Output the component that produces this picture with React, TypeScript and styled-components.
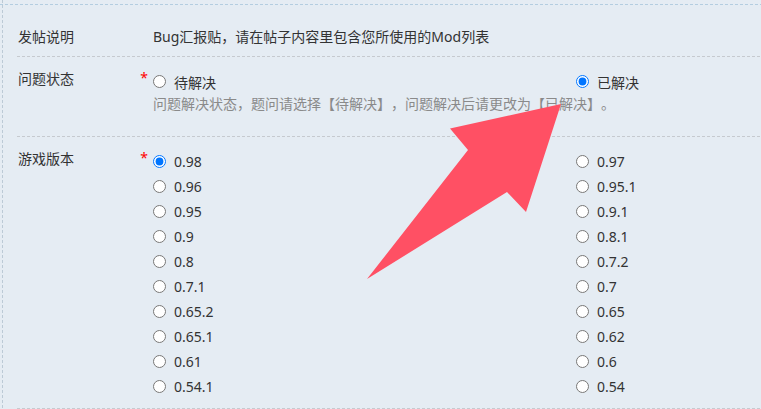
import React from "react";
import styled, { createGlobalStyle } from "styled-components";

const GlobalStyle = createGlobalStyle`
  html, body {
    margin: 0;
    padding: 0;
    background: #e5ecf3;
    overflow: hidden;
  }
  body {
    font-family: "Noto Sans", "Noto Sans CJK SC", sans-serif;
    font-size: 14px;
    color: #333;
    text-spacing-trim: space-all;
  }
`;

const Page = styled.div`
  position: relative;
  width: 761px;
  height: 409px;
  overflow: hidden;
`;

const Frame = styled.div`
  width: 1100px;
  padding: 5px 0 0 17px;
  background:
    repeating-linear-gradient(90deg, #b4cde0 0 3px, transparent 3px 5px) 0 4px / 100% 1px no-repeat,
    repeating-linear-gradient(180deg, #bccad6 0 3px, transparent 3px 5px) 2px 0 / 1px 100% no-repeat;
`;

const Row = styled.div<{ $pt: number; $pb: number; $center?: boolean }>`
  display: grid;
  grid-template-columns: 136px 1fr;
  align-items: ${(p) => (p.$center ? "center" : "start")};
  padding: ${(p) => p.$pt}px 0 ${(p) => p.$pb}px 0;
  background: repeating-linear-gradient(90deg, #c6cacf 0 3px, transparent 3px 5px) left bottom / 100% 1px no-repeat;
`;

const LabelCell = styled.div`
  display: flex;
  justify-content: space-between;
  align-items: flex-start;
  padding: 0 5px 0 1px;
  line-height: 20px;
  color: #333;
`;

const Star = styled.span`
  color: #f00;
  line-height: 17px;
`;

const Text = styled.div`
  line-height: 25px;
  color: #333;
`;

const Options = styled.div`
  display: grid;
  grid-template-columns: repeat(2, 423px);
`;

const Option = styled.label`
  display: flex;
  align-items: center;
  gap: 8px;
  height: 25px;
  color: #333;
  white-space: nowrap;
`;

const Radio = styled.input`
  margin: 0;
  width: 13px;
  height: 13px;
  flex: none;
`;

const Help = styled.div`
  line-height: 20px;
  color: #8a8a8a;
  margin-bottom: 13px;
  white-space: nowrap;
  text-spacing-trim: space-all;
`;

const Arrow = styled.svg`
  position: absolute;
  left: 0;
  top: 0;
  pointer-events: none;
`;

const versions = [
  "0.98", "0.97",
  "0.96", "0.95.1",
  "0.95", "0.9.1",
  "0.9", "0.8.1",
  "0.8", "0.7.2",
  "0.7.1", "0.7",
  "0.65.2", "0.65",
  "0.65.1", "0.62",
  "0.61", "0.6",
  "0.54.1", "0.54",
];

export default function App() {
  return (
    <Page>
      <GlobalStyle />
      <Frame>
        <Row $pt={19} $pb={8} $center>
          <LabelCell>发帖说明</LabelCell>
          <Text>Bug汇报贴，请在帖子内容里包含您所使用的Mod列表</Text>
        </Row>
        <Row $pt={12} $pb={10}>
          <LabelCell>
            <span>问题状态</span>
            <Star>*</Star>
          </LabelCell>
          <div>
            <Options>
              <Option>
                <Radio type="radio" name="status" />
                待解决
              </Option>
              <Option>
                <Radio type="radio" name="status" defaultChecked />
                已解决
              </Option>
            </Options>
            <Help>问题解决状态，题问请选择【待解决】，问题解决后请更改为【已解决】。</Help>
          </div>
        </Row>
        <Row $pt={12} $pb={10}>
          <LabelCell>
            <span>游戏版本</span>
            <Star>*</Star>
          </LabelCell>
          <Options>
            {versions.map((v, i) => (
              <Option key={v}>
                <Radio type="radio" name="version" defaultChecked={i === 0} />
                {v}
              </Option>
            ))}
          </Options>
        </Row>
      </Frame>
      <Arrow width="761" height="409" viewBox="0 0 761 409">
        <polygon
          points="561,104 450,128.5 468,150 367,279 507,192 526,212"
          fill="#ff5064"
        />
      </Arrow>
    </Page>
  );
}
